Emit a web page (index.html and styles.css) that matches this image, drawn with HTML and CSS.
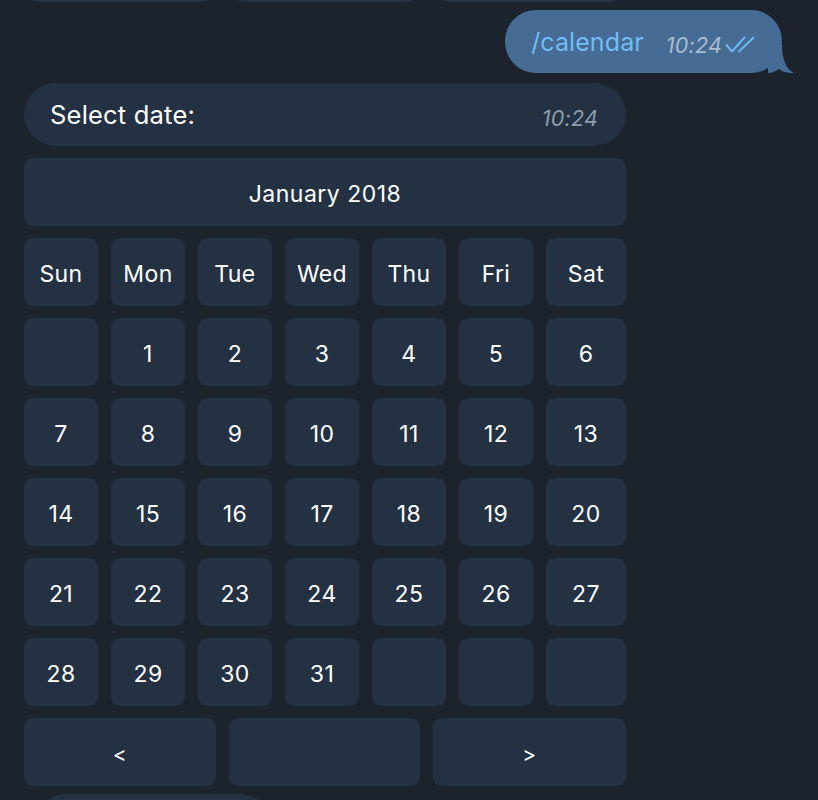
FILE: index.html
```html
<!DOCTYPE html>
<html>
<head>
<meta charset="utf-8">
<link rel="stylesheet" href="styles.css">
</head>
<body>
<div class="chat">
  <div class="prev-row">
    <div class="prev-btn"></div>
    <div class="prev-btn"></div>
    <div class="prev-btn"></div>
  </div>

  <div class="out-wrap">
    <div class="out-bubble">
      <span class="out-text">/calendar</span>
      <span class="out-time">10:24</span>
      <svg class="checks" width="31" height="17" viewBox="0 0 31 17">
        <polyline points="1.5,9 7,15.5 19.5,1.5" fill="none" stroke="#6ab8f2" stroke-width="2" stroke-linecap="round" stroke-linejoin="round"/>
        <line x1="14" y1="15.5" x2="28.5" y2="1.5" stroke="#6ab8f2" stroke-width="2" stroke-linecap="round"/>
      </svg>
      <svg class="tail" width="26" height="28" viewBox="0 0 26 28">
        <path d="M0 28 L0 0 L14 0 C14 14 18 24 26 28 C20 28.5 15 27 11 24 C8 26 4 28 0 28 Z" fill="#466b94"/>
      </svg>
    </div>
  </div>

  <div class="in-bubble">
    <span class="in-text">Select date:</span>
    <span class="in-time">10:24</span>
  </div>

  <div class="kb">
    <div class="kb-row single"><div class="key month">January 2018</div></div>
    <div class="kb-row days">
      <div class="key">Sun</div><div class="key">Mon</div><div class="key">Tue</div><div class="key">Wed</div><div class="key">Thu</div><div class="key">Fri</div><div class="key">Sat</div>
    </div>
    <div class="kb-row days">
      <div class="key"></div><div class="key">1</div><div class="key">2</div><div class="key">3</div><div class="key">4</div><div class="key">5</div><div class="key">6</div>
    </div>
    <div class="kb-row days">
      <div class="key">7</div><div class="key">8</div><div class="key">9</div><div class="key">10</div><div class="key">11</div><div class="key">12</div><div class="key">13</div>
    </div>
    <div class="kb-row days">
      <div class="key">14</div><div class="key">15</div><div class="key">16</div><div class="key">17</div><div class="key">18</div><div class="key">19</div><div class="key">20</div>
    </div>
    <div class="kb-row days">
      <div class="key">21</div><div class="key">22</div><div class="key">23</div><div class="key">24</div><div class="key">25</div><div class="key">26</div><div class="key">27</div>
    </div>
    <div class="kb-row days">
      <div class="key">28</div><div class="key">29</div><div class="key">30</div><div class="key">31</div><div class="key"></div><div class="key"></div><div class="key"></div>
    </div>
    <div class="kb-row nav">
      <div class="key nav-key">&lt;</div><div class="key"></div><div class="key nav-key">&gt;</div>
    </div>
  </div>

  <div class="next-bubble"></div>
</div>
</body>
</html>
```

FILE: styles.css
```css
html, body {
  margin: 0;
  padding: 0;
  background: #1c232d;
  height: 800px;
  overflow: hidden;
}

body {
  font-family: "Inter", "Roboto", sans-serif;
  color: #ffffff;
}

.chat {
  display: flex;
  flex-direction: column;
  width: 818px;
  height: 800px;
  overflow: hidden;
}

.prev-row {
  display: flex;
  flex-shrink: 0;
  gap: 21px;
  margin: -58px 0 0 28px;
  height: 60px;
}

.prev-btn {
  width: 184px;
  height: 60px;
  border-radius: 10px;
  background: #26313f;
}

.out-wrap {
  display: flex;
  flex-shrink: 0;
  justify-content: flex-end;
  padding-right: 36px;
  margin-top: 8px;
}

.out-bubble {
  position: relative;
  display: flex;
  align-items: center;
  height: 63px;
  padding: 0 26px 0 26px;
  background: #466b94;
  border-radius: 31px;
  box-sizing: border-box;
}

.out-text {
  position: relative;
  z-index: 1;
  font-size: 25px;
  color: #72bdf5;
  letter-spacing: 0.1px;
}

.out-time {
  font-size: 21.5px;
  font-style: italic;
  color: #a9bcd2;
  margin-left: 22px;
  margin-top: 6px;
  letter-spacing: 0.2px;
}

.checks {
  margin-left: 3px;
  margin-top: 5px;
}

.tail {
  position: absolute;
  right: -12px;
  bottom: 0;
}

.in-bubble {
  display: flex;
  flex-shrink: 0;
  align-items: center;
  justify-content: space-between;
  margin: 10px 0 0 24px;
  width: 602px;
  height: 63px;
  box-sizing: border-box;
  padding: 0 28px 0 26px;
  background: #243142;
  border-radius: 32px;
}

.in-text {
  font-size: 25.5px;
  letter-spacing: 0.2px;
}

.in-time {
  font-size: 21.5px;
  font-style: italic;
  color: #8d9cad;
  margin-top: 6px;
  letter-spacing: 0.2px;
}

.kb {
  display: flex;
  flex-shrink: 0;
  flex-direction: column;
  gap: 12px;
  margin: 12px 0 0 24px;
  width: 602px;
}

.kb-row {
  display: grid;
  gap: 13px;
  height: 68px;
}

.kb-row.single {
  grid-template-columns: 1fr;
}

.kb-row.days {
  grid-template-columns: repeat(6, 74px) 80px;
}

.kb-row.nav {
  grid-template-columns: 192px 191px 1fr;
}

.key {
  display: flex;
  align-items: center;
  justify-content: center;
  background: #243142;
  border-radius: 9px;
  font-size: 23px;
  letter-spacing: 0.4px;
  padding-top: 3px;
  box-sizing: border-box;
}

.key.month {
  letter-spacing: 0.5px;
}

.nav-key {
  font-size: 21px;
  padding-top: 4px;
}

.next-bubble {
  flex-shrink: 0;
  margin: 8px 0 0 36px;
  width: 234px;
  height: 60px;
  border-radius: 30px;
  background: #243142;
}
```
